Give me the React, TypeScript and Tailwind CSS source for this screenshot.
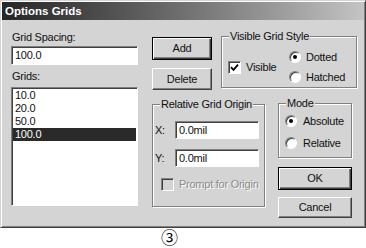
import type { ReactNode } from "react";

const sunken =
  "border border-t-[#808080] border-l-[#808080] border-r-white border-b-white shadow-[inset_1px_1px_0_#404040]";

const Button = (props: { label: string; isDefault?: boolean; className?: string }) => (
  <button
    className={`flex items-center justify-center bg-[#d4d4d4] text-[#111] ${
      props.isDefault
        ? "border border-black shadow-[inset_1px_1px_0_#fff,inset_-1px_-1px_0_#404040,inset_-2px_-2px_0_#808080]"
        : "border border-t-white border-l-white border-r-[#404040] border-b-[#404040] shadow-[inset_-1px_-1px_0_#808080]"
    } ${props.className}`}
  >
    {props.label}
  </button>
);

const Group = (props: { title: string; className: string; children: ReactNode }) => (
  <div
    className={`relative border border-[#808080] shadow-[inset_1px_1px_0_#fff,1px_1px_0_#fff] ${props.className}`}
  >
    <span className="absolute -top-[7px] left-[7px] bg-[#d4d4d4] px-[1px] leading-[13px]">
      {props.title}
    </span>
    {props.children}
  </div>
);

const Radio = (props: { on?: boolean }) => (
  <span
    className={`flex h-[12px] w-[12px] items-center justify-center rounded-full bg-white ${sunken}`}
  >
    {props.on && <span className="h-[4px] w-[4px] rounded-full bg-black" />}
  </span>
);

const Check = (props: { checked?: boolean; disabled?: boolean }) => (
  <span
    className={`flex h-[13px] w-[13px] items-center justify-center ${sunken} ${
      props.disabled ? "bg-[#d4d4d4]" : "bg-white"
    }`}
  >
    {props.checked && (
      <svg width="9" height="9" viewBox="0 0 9 9">
        <path d="M1 4.2 L3.5 6.8 L8 1.6" stroke="black" strokeWidth="1.8" fill="none" />
      </svg>
    )}
  </span>
);

const grids = ["10.0", "20.0", "50.0", "100.0"];

export default function App() {
  return (
    <div className="h-[248px] w-[366px] bg-white font-['Liberation_Sans',Arial,sans-serif] text-[11px] leading-[13px] tracking-[-0.25px] text-[#111]">
      <div className="h-[228px] w-[366px] border border-t-[#d4d4d4] border-l-[#d4d4d4] border-r-[#404040] border-b-[#404040] bg-[#d4d4d4] p-[1px] shadow-[inset_1px_1px_0_#fff,inset_-1px_-1px_0_#808080]">
        <div className="flex h-[18px] items-center bg-linear-to-r from-[#262626] to-[#c4c4c4] pl-[3px] text-[11.5px] font-bold tracking-normal text-white">
          Options Grids
        </div>

        <div className="flex pl-[9px] pt-[11px]">
          {/* left column */}
          <div className="flex w-[127px] flex-col">
            <div className="h-[13px] pl-[1px]">Grid Spacing:</div>
            <div className={`mt-[2px] flex h-[19px] items-center bg-white pl-[3px] ${sunken}`}>100.0</div>
            <div className="mt-[5px] h-[13px] pl-[1px]">Grids:</div>
            <div className={`mt-[4px] h-[119px] bg-white p-[1px] ${sunken}`}>
              {grids.map((g) => (
                <div
                  key={g}
                  className={`h-[13px] pl-[2px] ${g === "100.0" ? "bg-[#2a2a2a] text-white" : ""}`}
                >
                  {g}
                </div>
              ))}
            </div>
          </div>

          {/* right area */}
          <div className="ml-[14px] flex flex-col">
            <div className="mt-[5px] flex items-start">
              <div className="flex flex-col">
                <Button label="Add" isDefault className="mt-[1px] h-[23px] w-[60px]" />
                <Button label="Delete" className="mt-[8px] h-[22px] w-[60px]" />
              </div>
              <Group
                title="Visible Grid Style"
                className="ml-[9px] grid h-[52px] w-[136px] grid-cols-[67px_1fr] items-center pt-[10px]"
              >
                <div className="flex items-center gap-[5px] pl-[6px]">
                  <Check checked />
                  <span>Visible</span>
                </div>
                <div className="flex flex-col">
                  <div className="flex h-[20px] items-center gap-[5px]">
                    <Radio on />
                    <span>Dotted</span>
                  </div>
                  <div className="flex h-[20px] items-center gap-[5px]">
                    <Radio />
                    <span>Hatched</span>
                  </div>
                </div>
              </Group>
            </div>

            <div className="mt-[13px] flex items-start">
              <Group title="Relative Grid Origin" className="mt-[1px] h-[103px] w-[113px] pt-[16px]">
                <div className="flex h-[18px] items-center">
                  <span className="w-[22px] pl-[2px]">X:</span>
                  <div className={`flex h-[18px] w-[84px] items-center bg-white pl-[3px] ${sunken}`}>0.0mil</div>
                </div>
                <div className="mt-[10px] flex h-[18px] items-center">
                  <span className="w-[22px] pl-[2px]">Y:</span>
                  <div className={`flex h-[18px] w-[84px] items-center bg-white pl-[3px] ${sunken}`}>0.0mil</div>
                </div>
                <div className="mt-[11px] flex items-center gap-[5px] pl-[8px]">
                  <Check disabled />
                  <span className="text-[#8c8c8c] [text-shadow:1px_1px_0_#fff]">Prompt for Origin</span>
                </div>
              </Group>

              <div className="ml-[13px] flex w-[74px] flex-col">
                <Group title="Mode" className="h-[55px] pt-[6px]">
                  <div className="flex h-[22px] items-center gap-[6px] pl-[6px]">
                    <Radio on />
                    <span>Absolute</span>
                  </div>
                  <div className="flex h-[22px] items-center gap-[6px] pl-[6px]">
                    <Radio />
                    <span>Relative</span>
                  </div>
                </Group>
                <Button label="OK" isDefault className="mt-[9px] h-[23px] w-[74px]" />
                <Button label="Cancel" className="mt-[7px] h-[21px] w-[74px]" />
              </div>
            </div>
          </div>
        </div>
      </div>

      <div className="pl-[161px] font-['Noto_Sans_CJK_SC',sans-serif] text-[17px] leading-[18px] tracking-normal text-black">
        ③
      </div>
    </div>
  );
}
